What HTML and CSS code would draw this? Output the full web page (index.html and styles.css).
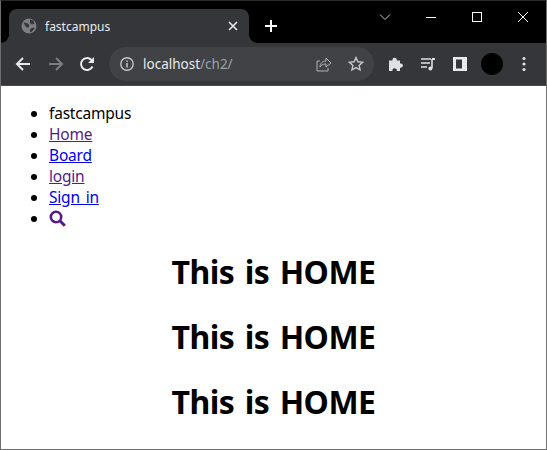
FILE: index.html
```html
<!DOCTYPE html>
<html lang="en">

<head>
    <meta charset="UTF-8">
    <meta name="viewport" content="width=device-width, initial-scale=1.0">
    <title>fastcampus</title>
    <link rel="stylesheet" href="styles.css">
</head>

<body>
    <div class="window">
        <!-- Tab strip -->
        <div class="titlebar">
            <div class="tab">
                <svg class="favicon" width="16" height="16" viewBox="0 0 16 16">
                    <circle cx="8" cy="8" r="7.5" fill="#7b7e83"/>
                    <path d="M2.5 4.5l3.5.5 2.5 2-1 2.5-2 0-1.5-2zM9 1.5l3.5 1 1 3-2.500 1-2-1.500zM9 11l3.500-1.500 1 1-3.500 4-1-1z" fill="#35363a"/>
                </svg>
                <span class="tab-title">fastcampus</span>
                <svg class="tab-close" width="10" height="10" viewBox="0 0 10 10">
                    <path d="M1 1l8 8M9 1l-8 8" stroke="#e8eaed" stroke-width="1.6"/>
                </svg>
            </div>
            <svg class="new-tab" width="14" height="14" viewBox="0 0 14 14">
                <path d="M7 1v12M1 7h12" stroke="#fff" stroke-width="2"/>
            </svg>
            <div class="win-controls">
                <svg width="12" height="12" viewBox="0 0 12 12"><path d="M1 3.5l5 5 5-5" fill="none" stroke="#c4c4c4"/></svg>
                <svg width="12" height="12" viewBox="0 0 12 12"><path d="M1 6.5h10" stroke="#fff"/></svg>
                <svg width="12" height="12" viewBox="0 0 12 12"><rect x="1.5" y="1.5" width="9" height="9" fill="none" stroke="#fff"/></svg>
                <svg width="12" height="12" viewBox="0 0 12 12"><path d="M1 1l10 10M11 1l-10 10" stroke="#fff"/></svg>
            </div>
        </div>

        <!-- Address bar row -->
        <div class="toolbar">
            <svg class="tool back" width="16" height="16" viewBox="0 0 16 16">
                <path d="M15 8H2M8 2L2 8l6 6" fill="none" stroke="#e8eaed" stroke-width="2"/>
            </svg>
            <svg class="tool forward" width="16" height="16" viewBox="0 0 16 16">
                <path d="M1 8h13M8 2l6 6-6 6" fill="none" stroke="#7b7d80" stroke-width="2"/>
            </svg>
            <svg class="tool reload" width="16" height="16" viewBox="0 0 16 16">
                <path d="M13.5 10.5A6 6 0 1 1 12.5 4" fill="none" stroke="#e8eaed" stroke-width="2"/>
                <path d="M15 1v6H9z" fill="#e8eaed"/>
            </svg>
            <div class="omnibox">
                <svg width="16" height="16" viewBox="0 0 16 16">
                    <circle cx="8" cy="8" r="6.2" fill="none" stroke="#c4c7ca" stroke-width="1.4"/>
                    <path d="M8 7v4.4M8 4.4v1.5" stroke="#c4c7ca" stroke-width="1.5"/>
                </svg>
                <span class="url">localhost<span class="url-path">/ch2/</span></span>
                <svg class="share" width="16" height="16" viewBox="0 0 16 16">
                    <path d="M4 5H1v10h11v-3" fill="none" stroke="#aeb1b5"/>
                    <path d="M4 11c0-4 3-6 6-6V2l5 5-5 4V8c-3 0-5 1-6 3z" fill="none" stroke="#aeb1b5"/>
                </svg>
                <svg class="star" width="16" height="16" viewBox="0 0 16 16">
                    <path d="M8 1.6l1.9 4.2 4.6.5-3.4 3.1 1 4.5L8 11.6l-4.1 2.3 1-4.5L1.5 6.3l4.6-.5z" fill="none" stroke="#c4c7ca" stroke-width="1.4"/>
                </svg>
            </div>
            <div class="extensions">
                <div class="ext-slot">
                    <svg width="16" height="16" viewBox="0 0 16 16">
                        <path d="M1 4.5h3.5a2.2 2.2 0 1 1 4.200 0H12V7.500a2.200 2.200 0 1 1 0 4.200V15H8.700a2.200 2.200 0 1 0-4.200 0H1z" fill="#dfe1e5"/>
                    </svg>
                </div>
                <div class="ext-slot">
                    <svg width="16" height="16" viewBox="0 0 16 16">
                        <path d="M1 3h10M1 7h9M1 11h6" stroke="#dfe1e5" stroke-width="1.4"/>
                        <path d="M12 3v9" stroke="#dfe1e5" stroke-width="1.6"/>
                        <path d="M12 2h3v2h-3z" fill="#dfe1e5"/>
                        <circle cx="10.4" cy="12.6" r="2" fill="#dfe1e5"/>
                    </svg>
                </div>
                <div class="ext-slot">
                    <svg width="16" height="16" viewBox="0 0 16 16">
                        <path d="M1 1h14v14H1zM4 3.500v9h6v-9z" fill="#e8eaed" fill-rule="evenodd"/>
                    </svg>
                </div>
                <div class="ext-slot"><div class="avatar"></div></div>
                <div class="ext-slot">
                    <svg width="4" height="16" viewBox="0 0 4 16">
                        <circle cx="2" cy="2.5" r="1.6" fill="#dfe1e5"/>
                        <circle cx="2" cy="8" r="1.6" fill="#dfe1e5"/>
                        <circle cx="2" cy="13.5" r="1.6" fill="#dfe1e5"/>
                    </svg>
                </div>
            </div>
        </div>

        <!-- Page -->
        <div class="page">
            <ul class="nav">
                <li>fastcampus</li>
                <li><a href="#" class="visited">Home</a></li>
                <li><a href="#">Board</a></li>
                <li><a href="#" class="visited">login</a></li>
                <li><a href="#">Sign in</a></li>
                <li>
                    <a href="#" class="search visited">
                        <svg width="17" height="17" viewBox="0 0 17 17">
                            <circle cx="7" cy="7" r="5.2" fill="none" stroke="#551a8b" stroke-width="2.6"/>
                            <path d="M10.8 10.8l5 5" stroke="#551a8b" stroke-width="3"/>
                        </svg>
                    </a>
                </li>
            </ul>
            <h1>This is HOME</h1>
            <h1>This is HOME</h1>
            <h1>This is HOME</h1>
        </div>
    </div>
</body>

</html>
```

FILE: styles.css
```css
html,
body {
    margin: 0;
    height: 100%;
}

body {
    font-family: "Noto Sans", "Open Sans", sans-serif;
    background-color: white;
    overflow: hidden;
}

.window {
    display: flex;
    flex-direction: column;
    height: 450px;
    box-sizing: border-box;
    border: 1px solid #6f6f6f;
    border-top-color: #2a2a2a;
}

.titlebar {
    display: flex;
    align-items: flex-end;
    height: 42px;
    padding-left: 8px;
    background-color: #000;
    box-sizing: border-box;
}

.tab {
    position: relative;
    display: flex;
    align-items: center;
    width: 240px;
    height: 34px;
    padding: 0 11px 0 12px;
    box-sizing: border-box;
    background-color: #35363a;
    border-radius: 8px 8px 0 0;
    color: #e8eaed;
    font-size: 12px;
}

/* little flares at the bottom corners of the active tab */
.tab::before,
.tab::after {
    content: "";
    position: absolute;
    bottom: 0;
    width: 8px;
    height: 8px;
}

.tab::before {
    left: -8px;
    background: radial-gradient(circle at 0 0, #000 7.5px, #35363a 8px);
}

.tab::after {
    right: -8px;
    background: radial-gradient(circle at 100% 0, #000 7.5px, #35363a 8px);
}

.tab-title {
    flex: 1;
    margin-left: 8px;
}

.new-tab {
    margin: 0 0 10px 15px;
}

.win-controls {
    display: flex;
    align-items: center;
    gap: 34px;
    margin-left: auto;
    padding: 0 17px 20px 0;
    align-self: flex-end;
}

.toolbar {
    display: flex;
    align-items: center;
    height: 43px;
    padding: 0 0 1px 14px;
    background-color: #35363a;
    box-sizing: border-box;
    border-bottom: 1px solid #4a4a4c;
}

.tool {
    flex: none;
}

.forward {
    margin-left: 17px;
}

.reload {
    margin-left: 15px;
}

.omnibox {
    display: flex;
    align-items: center;
    width: 265px;
    height: 34px;
    margin-left: 14px;
    padding: 0 10px;
    box-sizing: border-box;
    background-color: #414245;
    border-radius: 17px;
}

.url {
    flex: 1;
    margin-left: 8px;
    color: #e8eaed;
    font-size: 13.5px;
}

.url-path {
    color: #9aa0a6;
}

.share {
    margin-right: 16px;
}

.extensions {
    display: flex;
    align-items: center;
    margin-left: 6px;
}

.ext-slot {
    display: flex;
    align-items: center;
    justify-content: center;
    width: 32px;
}

.avatar {
    width: 22px;
    height: 22px;
    border-radius: 50%;
    background-color: #000;
}

.page {
    flex: 1;
    background-color: white;
    color: #000;
}

.nav {
    margin: 17px 0 16px;
    padding-left: 48px;
    font-size: 15.5px;
    line-height: 21px;
    letter-spacing: -0.2px;
    word-spacing: 2px;
}

.nav a {
    color: #0000ee;
}

.nav a.visited {
    color: #551a8b;
}

.search {
    display: inline-block;
    height: 21px;
    vertical-align: top;
}

.search svg {
    display: block;
    margin-top: 2px;
}

h1 {
    margin: 21px 0;
    font-size: 32px;
    line-height: 44px;
    font-weight: 700;
    text-align: center;
    letter-spacing: -0.5px;
    word-spacing: 2.5px;
}
```
